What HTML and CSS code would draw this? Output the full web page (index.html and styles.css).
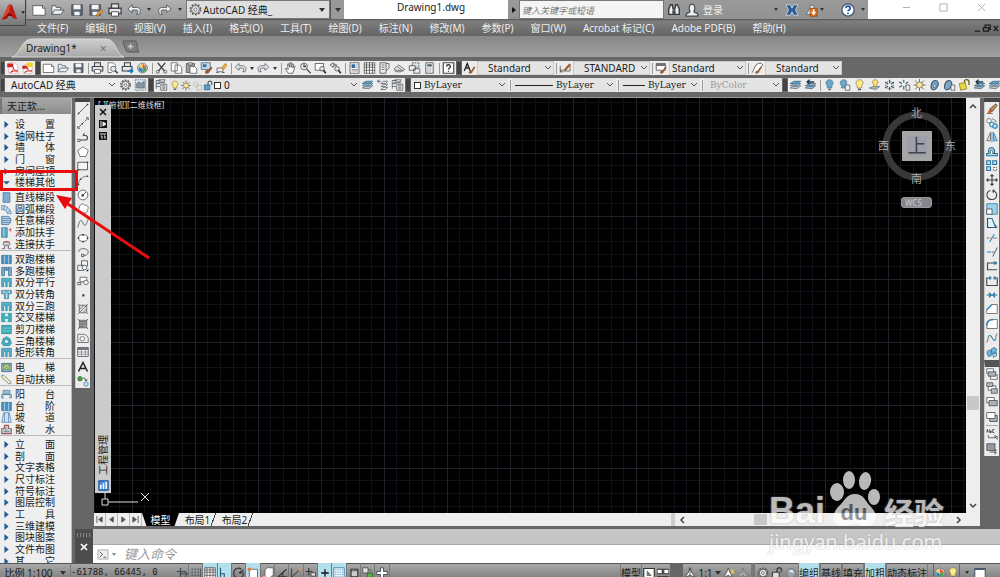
FILE: index.html
```html
<!DOCTYPE html>
<html lang="zh-CN">
<head>
<meta charset="utf-8">
<title>Drawing1.dwg</title>
<link rel="stylesheet" href="styles.css">
</head>
<body>
<svg class="sprite" aria-hidden="true">
  <g fill="none" stroke="#4a4f55" stroke-width="1.3">
  <symbol id="new" viewBox="0 0 16 16"><path d="M1 3h11l3 3v8H1z" fill="#fff" stroke="#555"/><path d="M12 3v3h3" stroke="#555" fill="#ccc"/></symbol>
  <symbol id="open" viewBox="0 0 16 16"><path d="M1 13V3h4l1 2h5v3M1 13l3-5h11l-4 5z" fill="#e9eef2" stroke="#4f565c"/></symbol>
  <symbol id="save" viewBox="0 0 16 16"><path d="M2 2h12v12H2z" fill="#5c6873" stroke="#434c55"/><path d="M4 2h8v5H4zM5 10h6v4H5z" fill="#f2f4f6" stroke="none"/></symbol>
  <symbol id="saveas" viewBox="0 0 16 16"><path d="M1 2h12v12H1z" fill="#5c6873" stroke="#434c55"/><path d="M3 2h8v5H3zM4 10h6v4H4z" fill="#f2f4f6" stroke="none"/><path d="M8 14l6-7 2 2-6 6z" fill="#e8a33c" stroke="#a66a1b"/></symbol>
  <symbol id="print" viewBox="0 0 16 16"><path d="M4 6V1h8v5M1 6h14v6H1z" fill="#e6e6e6" stroke="#3f454b" stroke-width="1.5"/><path d="M4 10h8v5H4z" fill="#fff" stroke="#3f454b"/></symbol>
  <symbol id="preview" viewBox="0 0 16 16"><path d="M12 6V4L9 1H2v13h5" fill="#fff" stroke="#555"/><circle cx="9" cy="9" r="3.500" fill="#dcecf5" stroke="#444"/><path d="M11.500 11.500L15 15" stroke="#444" stroke-width="2"/></symbol>
  <symbol id="plot" viewBox="0 0 16 16"><path d="M4 6V1h8v5M1 6h13v6H1z" fill="#e6e6e6" stroke="#3f454b" stroke-width="1.500"/><path d="M8 12h7M12 9l3 3-3 3" stroke="#1f78b8" stroke-width="2" fill="none"/></symbol>
  <symbol id="globe" viewBox="0 0 16 16"><circle cx="8" cy="8" r="6.500" fill="#dfe9ee" stroke="#59636a"/><path d="M8 2l5 4-5 3z" fill="#e25b3c"/><path d="M8 9l5-3v6l-5 2z" fill="#55a04b"/><path d="M8 9L3 6v6l5 2z" fill="#3f86c0"/><path d="M8 2L3 6l5 3z" fill="#f0ce4d"/></symbol>
  <symbol id="cut" viewBox="0 0 16 16"><path d="M3 1l9 11M13 1L4 12" stroke="#444" stroke-width="1.600"/><circle cx="3" cy="13" r="2" fill="none" stroke="#444"/><circle cx="13" cy="13" r="2" fill="none" stroke="#444"/></symbol>
  <symbol id="copy" viewBox="0 0 16 16"><path d="M1 1h8v11H1zM6 4h6l3 3v8H6z" fill="#fff" stroke="#555"/></symbol>
  <symbol id="paste" viewBox="0 0 16 16"><path d="M1 2h11v12H1z" fill="#9c9c92" stroke="#555"/><path d="M4 1h5v3H4z" fill="#ddd" stroke="#555"/><path d="M6 6h6l3 3v6H6z" fill="#fff" stroke="#555"/></symbol>
  <symbol id="match" viewBox="0 0 16 16"><path d="M1 1h12v9H1z" fill="#c9dcea" stroke="#3c5f7c"/><path d="M3 3h5v4H3z" fill="#3975a8"/><path d="M6 15c0-4 2-5 4-4l4-5 2 2-4 5c0 2-3 3-6 2z" fill="#9a5423"/></symbol>
  <symbol id="block" viewBox="0 0 16 16"><path d="M2 8h8v5H2z" fill="#eee" stroke="#555"/><path d="M1 14h3M9 14h3" stroke="#333"/><path d="M8 8l5-6 2 2-4 6z" fill="#efb444" stroke="#b77a1b"/></symbol>
  <symbol id="undo" viewBox="0 0 16 16"><path d="M6 2L1 7l5 4V8h5c2 0 2 3 0 5h3c3-5 0-8-3-8H6z" fill="#edf0f2" stroke="#4c5258"/></symbol>
  <symbol id="redo" viewBox="0 0 16 16"><path d="M10 2l5 5-5 4V8H5c-2 0-2 3 0 5H2C-1 8 2 5 5 5h5z" fill="#edf0f2" stroke="#4c5258"/></symbol>
  <symbol id="hand" viewBox="0 0 16 16"><path d="M5 15L1 9l1-1 3 2-1-7 1-1 2 5V1h2v6l2-5 1 1-1 5 2-3 1 1-3 9z" fill="#fff" stroke="#444"/></symbol>
  <symbol id="zoom" viewBox="0 0 16 16"><circle cx="6" cy="6" r="4.500" fill="#e4edf2" stroke="#444"/><path d="M6 3v3h3M9.500 9.500L15 15" stroke="#444" fill="none" stroke-width="1.700"/></symbol>
  <symbol id="zoomw" viewBox="0 0 16 16"><path d="M1 2h11v9H1z" fill="#fff" stroke="#444"/><circle cx="10" cy="9" r="3" fill="#dce9f1" stroke="#444"/><path d="M12 11l3 4" stroke="#222" stroke-width="2"/></symbol>
  <symbol id="zoomp" viewBox="0 0 16 16"><path d="M5 1L1 4l4 3V5h4V3H5z" fill="#eee" stroke="#444"/><circle cx="10" cy="9" r="3" fill="#dce9f1" stroke="#444"/><path d="M12 11l3 4" stroke="#222" stroke-width="2"/></symbol>
  <symbol id="props" viewBox="0 0 16 16"><path d="M2 1h12v14H2z" fill="#fff" stroke="#444"/><path d="M4 3h5v5H4z" fill="#2f6da3"/><path d="M10 4h3M10 7h3M4 10h9M4 12h9" stroke="#777"/></symbol>
  <symbol id="grid" viewBox="0 0 16 16"><path d="M1 1h14v14H1z" fill="#fff" stroke="#444"/><path d="M1 4h14M1 7h14M1 11h14M4 1v14M8 1v14M12 1v14" stroke="#444"/></symbol>
  <symbol id="palette" viewBox="0 0 16 16"><path d="M2 1h8v14H2z" fill="#eee" stroke="#444"/><path d="M10 2h4v6l-4 4M4 4h4M4 7h4M4 10h4" stroke="#555" fill="none"/></symbol>
  <symbol id="sheet" viewBox="0 0 16 16"><path d="M1 9l6-5 8 6-5 3H3z" fill="#e6e9eb" stroke="#4c5359"/><path d="M5 6l8 6M2 11h9" stroke="#4c5359"/></symbol>
  <symbol id="markup" viewBox="0 0 16 16"><path d="M5 1h9v6H5z" fill="#d6e4ee" stroke="#444" stroke-dasharray="2 1"/><path d="M1 5h8v6H1zM7 9h8v6H7z" fill="#eee" stroke="#444"/></symbol>
  <symbol id="calc" viewBox="0 0 16 16"><path d="M3 1h10v14H3z" fill="#e9edf0" stroke="#444"/><path d="M5 3h6v3H5z" fill="#55606a"/><path d="M5 9h6M5 12h6" stroke="#555" stroke-dasharray="1 1"/></symbol>
  <symbol id="help" viewBox="0 0 16 16"><path d="M1 1h14v14H1z" fill="#fff" stroke="#444" stroke-width="1.500"/><path d="M5.500 6c0-4 5-3 5 0 0 2-2.500 2-2.500 4M8 11.500V13" stroke="#222" stroke-width="1.700" fill="none"/></symbol>
  <symbol id="helpr" viewBox="0 0 16 16"><circle cx="8" cy="8" r="7" fill="#fff" stroke="#45536b" stroke-width="1.500"/><path d="M5.500 6c0-3.500 5-3 5 0 0 2-2.500 2-2.500 3.500M8 11v1.800" stroke="#2252a4" stroke-width="2" fill="none"/></symbol>
  <symbol id="pdf" viewBox="0 0 16 16"><path d="M3 1h8l4 4v10H3z" fill="#fff" stroke="#d8a8a8"/><path d="M1 2h8v5H1z" fill="#cf2424"/><path d="M5 14c3-2 5-5 4-7 0 3 3 5 6 5-4 0-7 0-10 2z" stroke="#d02020" fill="none" stroke-width="1.200"/></symbol>
  <symbol id="pdf2" viewBox="0 0 16 16"><path d="M3 4h8l3 3v8H3z" fill="#fff" stroke="#d8a8a8"/><path d="M1 5h7v4H1z" fill="#cf2424"/><path d="M4 14c3-2 5-4 4-6 0 3 3 4 6 4-4 0-7 0-10 2z" stroke="#d02020" fill="none"/><path d="M7 1h8v5h-4l-2 2V6H7z" fill="#f5d41c"/></symbol>
  <symbol id="textstyle" viewBox="0 0 16 16"><path d="M1 12L5 2l4 10M3 8h5" stroke="#222" stroke-width="1.800" fill="none"/><path d="M7 15c0-3 2-4 3-3l4-6 2 1-4 6c0 2-3 3-5 2z" fill="#9a5a2c"/></symbol>
  <symbol id="dimstyle" viewBox="0 0 16 16"><path d="M1 5v9M14 3v9M1 12h13M1 12l3-2M1 12l3 2" stroke="#444" fill="none"/><path d="M5 11l8-9 2 2-7 8z" fill="#a35b2b"/></symbol>
  <symbol id="tabstyle" viewBox="0 0 16 16"><path d="M1 2h12v9H1z" fill="#fff" stroke="#444"/><path d="M1 4h12" stroke="#444" stroke-width="2"/><path d="M6 15c0-3 2-4 3-3l4-6 2 1-4 6c0 2-3 3-5 2z" fill="#9a5a2c"/></symbol>
  <symbol id="mlstyle" viewBox="0 0 16 16"><path d="M1 14L6 4q6-5 9 0l-4 5" fill="#fff" stroke="#444"/><path d="M5 15c0-3 2-4 3-3l4-6 2 1-4 6c0 2-3 3-5 2z" fill="#9a5a2c"/></symbol>
  <symbol id="gear" viewBox="0 0 16 16"><circle cx="8" cy="8" r="6.200" fill="none" stroke="#555" stroke-width="2" stroke-dasharray="2.400 1.500"/><circle cx="8" cy="8" r="4.800" fill="#eee" stroke="#555"/><circle cx="8" cy="8" r="1.900" fill="#fff" stroke="#555"/></symbol>
  <symbol id="wsave" viewBox="0 0 16 16"><path d="M1 1h14v14H1z" stroke="#5b6c7b" fill="#dce5eb" stroke-dasharray="2 1"/><path d="M3 12V6l3-2 3 2 4-3v9z" fill="#8497a6" stroke="#566572"/></symbol>
  <symbol id="layers" viewBox="0 0 16 16"><path d="M1 12l5-3h9l-5 4zM1 9l5-3h9l-5 4z" fill="#b8cbd8" stroke="#5c7180"/><path d="M1 6l5-3h9l-5 4z" fill="#5aa0cd" stroke="#3e6581"/></symbol>
  <symbol id="layerman" viewBox="0 0 16 16"><path d="M1 13V2h6M1 6h5M1 10h5M3 2l2-1h8l-2 3H3M3 7l2-2h8" stroke="#4c565e" fill="none"/><path d="M7 7h8v8H7z" fill="#eee" stroke="#4c565e"/><path d="M9 9h4M9 11h4M9 13h4" stroke="#4c565e"/></symbol>
  <symbol id="layerprev" viewBox="0 0 16 16"><path d="M1 3h5M1 3l3-2M1 3l3 2M6 6l3-3h6l-3 3zM6 10l3-3h6l-3 3zM6 14l3-3h6l-3 3z" fill="#eef1f3" stroke="#4c565e"/></symbol>
  <symbol id="bulb" viewBox="0 0 16 16"><path d="M8 1c-5 0-6 5-3 8v3h6V9c3-3 2-8-3-8z" fill="#fbe98e" stroke="#8f8247"/><path d="M6 14h4" stroke="#555" stroke-width="2"/></symbol>
  <symbol id="bulbb" viewBox="0 0 16 16"><path d="M8 1c-5 0-6 5-3 8v3h6V9c3-3 2-8-3-8z" fill="#69a9cf" stroke="#517790"/><path d="M6 14h4" stroke="#777" stroke-width="2"/></symbol>
  <symbol id="bulbs" viewBox="0 0 16 16"><path d="M7 1C2 1 1 6 4 9v3h5V9c3-3 3-8-2-8z" fill="#69a9cf" stroke="#517790"/><path d="M9 8h6v7H9z" fill="#eee" stroke="#555"/></symbol>
  <symbol id="bulbl" viewBox="0 0 16 16"><path d="M1 12l5-2h9l-5 4z" fill="#9fb8c8" stroke="#617787"/><path d="M9 1C5 1 4 5 7 7v3h4V7c3-2 2-6-2-6z" fill="#fbe172" stroke="#96853d"/></symbol>
  <symbol id="sun" viewBox="0 0 16 16"><path d="M8 0v16M0 8h16M2 2l12 12M14 2L2 14" stroke="#6b6551" stroke-width="1.200"/><circle cx="8" cy="8" r="4" fill="#fce5a0" stroke="#7a6e43"/></symbol>
  <symbol id="snow" viewBox="0 0 16 16"><path d="M8 1v14M2 4l12 8M14 4L2 12" stroke="#435b66" stroke-width="1.500"/><circle cx="8" cy="8" r="5" stroke="#435b66" fill="none" stroke-dasharray="3 1.500"/><circle cx="8" cy="8" r="2.500" fill="#eef6fa"/></symbol>
  <symbol id="snows" viewBox="0 0 16 16"><path d="M7 1v13M1 4l12 7M13 4L1 11" stroke="#435b66" stroke-width="1.500"/><circle cx="7" cy="7" r="2.500" fill="#eef6fa"/><path d="M10 8h5v7h-5z" fill="#eee" stroke="#555"/></symbol>
  <symbol id="ghost" viewBox="0 0 16 16"><circle cx="6" cy="6" r="4" fill="#ddd" stroke="#aaa" stroke-dasharray="2 1"/><path d="M8 8h7v7H8z" fill="#e6e6e6" stroke="#aaa"/></symbol>
  <symbol id="lock" viewBox="0 0 16 16"><path d="M8 7V4c0-4 6-4 6 0v3" stroke="#445d70" fill="none" stroke-width="1.800"/><path d="M2 7h9v8H2z" fill="#55a0d0" stroke="#36566b"/></symbol>
  <symbol id="lockg" viewBox="0 0 16 16"><path d="M8 7V4c0-4 6-4 6 0v3" stroke="#3d4348" fill="none" stroke-width="1.800"/><path d="M2 7h9v8H2z" fill="#dcdcdc" stroke="#3d4348" stroke-width="1.500"/></symbol>
  <symbol id="lockb" viewBox="0 0 16 16"><path d="M4 13C2 9 5 2 9 2s5 4 3 8-6 6-8 3z" fill="#7ba7c8" stroke="#405970" stroke-width="1.500"/><path d="M6 11c0-3 3-5 4-4s-1 5-4 4z" fill="#e6f0f7" stroke="#405970"/></symbol>
  <symbol id="lockbs" viewBox="0 0 16 16"><path d="M2 13C0 9 3 2 7 2s5 4 3 8-6 6-8 3z" fill="#7ba7c8" stroke="#405970" stroke-width="1.500"/><path d="M10 8h5v7h-5z" fill="#eee" stroke="#555"/></symbol>
  <symbol id="locky" viewBox="0 0 16 16"><path d="M8 6V3c0-3 6-3 6 1v4" stroke="#69651f" fill="none" stroke-width="1.800"/><path d="M1 6l8-1 2 8-8 2z" fill="#e8d93b" stroke="#827920"/></symbol>
  <symbol id="laycur" viewBox="0 0 16 16"><path d="M1 12l5-3h9l-5 4zM1 9l5-3h9l-5 4z" fill="#91b7d0" stroke="#4b687d"/><path d="M3 4h10M3 4l4-3M3 4l4 3" stroke="#1d3b54" stroke-width="2" fill="none"/></symbol>
  <symbol id="line" viewBox="0 0 16 16"><path d="M2 14L14 2" stroke="#3c4248"/><path d="M1 13h2v2H1zM13 1h2v2h-2z" fill="#333"/></symbol>
  <symbol id="xline" viewBox="0 0 16 16"><path d="M2 14L14 2" stroke="#3c4248" stroke-dasharray="5 1"/><path d="M1 12v3h3M12 1h3v3" stroke="#333" fill="none"/><path d="M6 8h2v2H6z" fill="#333"/></symbol>
  <symbol id="pline" viewBox="0 0 16 16"><path d="M2 12h9c4 0 4-6 0-6H8M8 6l2-3" stroke="#43494f" fill="none" stroke-width="1.500"/><path d="M1 11h3v3H1z" fill="#fff" stroke="#43494f"/></symbol>
  <symbol id="poly" viewBox="0 0 16 16"><path d="M8 1l7 5-3 8H4L1 6z" stroke="#555" fill="#fff"/></symbol>
  <symbol id="rect" viewBox="0 0 16 16"><path d="M1 3h13v10H1z" fill="#f5f5f5" stroke="#555b61" stroke-width="1.300"/><path d="M1 12h2v2H1zM13 2h2v2h-2z" fill="#444"/></symbol>
  <symbol id="arc" viewBox="0 0 16 16"><path d="M2 14C2 7 7 3 14 3" stroke="#555b61" fill="none"/><path d="M1 13h2v2H1zM4 6h2v2H4zM13 2h2v2h-2z" fill="#444"/></symbol>
  <symbol id="circle" viewBox="0 0 16 16"><circle cx="8" cy="8" r="6.500" fill="#fff" stroke="#42484e"/><path d="M8 8l4-4" stroke="#333"/><path d="M6 7h3v3H6z" fill="#333"/></symbol>
  <symbol id="cloud" viewBox="0 0 16 16"><path d="M4 13C0 12 0 8 3 7c0-6 6-7 7-4 5-1 6 4 4 6 0 5-4 5-5 3" stroke="#555" fill="#fff"/></symbol>
  <symbol id="spline" viewBox="0 0 16 16"><path d="M1 14C4 2 6 3 8 8s4 5 7-6" stroke="#42484e" fill="none"/></symbol>
  <symbol id="ellipse" viewBox="0 0 16 16"><ellipse cx="8" cy="8" rx="6" ry="4.500" fill="#fff" stroke="#42484e"/><path d="M7 3h2v2H7zM1 7h2v2H1zM13 7h2v2h-2zM7 12h2v2H7z" fill="#333"/></symbol>
  <symbol id="earc" viewBox="0 0 16 16"><path d="M2 8c0-6 13-6 13 0 0 3-3 5-7 5" stroke="#42484e" fill="none"/><path d="M6 11h3v3H6z" fill="#fff" stroke="#333"/></symbol>
  <symbol id="insert" viewBox="0 0 16 16"><path d="M6 1h8v7H6zM1 7h8v7H1z" fill="#eef2f5" stroke="#42484e"/><circle cx="10" cy="10" r="3" fill="#fff" stroke="#42484e"/><path d="M12 15l3-3v3z" fill="#111"/></symbol>
  <symbol id="mkblock" viewBox="0 0 16 16"><path d="M4 3h9v6H4z" fill="#fff" stroke="#42484e"/><path d="M1 10h4v3H1z" fill="#eee" stroke="#42484e"/><circle cx="12" cy="10" r="3" fill="#fff" stroke="#42484e"/></symbol>
  <symbol id="point" viewBox="0 0 16 16"><path d="M7 7h3v3H7z" fill="#444"/></symbol>
  <symbol id="hatch" viewBox="0 0 16 16"><path d="M3 3h10v10H3z" fill="#ddd" stroke="#555"/><path d="M3 9l6-6M3 13L13 3M8 13l5-5M1 1l3 3M15 1l-3 3M1 15l3-3M15 15l-3-3" stroke="#62686d"/></symbol>
  <symbol id="trans" viewBox="0 0 16 16"><path d="M1 1h14v14H1z" fill="#eaf5fb" stroke="#2c6f9c"/><path d="M3 4h11M3 7h11M3 10h11M3 13h11" stroke="#5a9cc8" stroke-width="1.500" stroke-dasharray="1.500 1.500"/></symbol>
  <symbol id="grad" viewBox="0 0 16 16"><path d="M3 3h10v10H3z" fill="#aaa" stroke="#555"/><path d="M4 5h8M4 8h8M4 11h6M1 1l3 3M15 1l-3 3M1 15l3-3M15 15l-3-3" stroke="#444"/></symbol>
  <symbol id="region" viewBox="0 0 16 16"><path d="M1 14V3h8c3 0 6 3 6 6v5z" fill="#eee" stroke="#555"/><circle cx="7" cy="9" r="3" fill="#fff" stroke="#555"/></symbol>
  <symbol id="table" viewBox="0 0 16 16"><path d="M1 2h14v12H1z" fill="#fff" stroke="#42484e"/><path d="M1 4h14" stroke="#42484e" stroke-width="2"/><path d="M1 8h14M1 11h14M6 4v10M11 4v10" stroke="#73797f"/></symbol>
  <symbol id="text" viewBox="0 0 16 16"><path d="M2 14L8 2l6 12M4.500 10h7" stroke="#222" stroke-width="2" fill="none"/></symbol>
  <symbol id="addsel" viewBox="0 0 16 16"><circle cx="4" cy="5" r="3" fill="#4ca24a" stroke="#2a6d2b"/><circle cx="12" cy="12" r="3" fill="#bde2f4" stroke="#3c83aa"/><path d="M8 4c3 0 4 1 4 4M10 6l2 2 2-2" stroke="#333" fill="none"/></symbol>
  <symbol id="erase" viewBox="0 0 16 16"><path d="M1 14h8" stroke="#555"/><path d="M2 13l3-5 4 3-4 3z" fill="#d4582d"/><path d="M5 8l8-7 2 2-6 8z" fill="#bb8d5b" stroke="#674928"/></symbol>
  <symbol id="mcopy" viewBox="0 0 16 16"><circle cx="4" cy="5" r="3" fill="#fff" stroke="#555"/><circle cx="8" cy="10" r="3" fill="#fff" stroke="#2e85b4" stroke-width="1.500"/><circle cx="12" cy="12" r="3" fill="#bde2f4" stroke="#2e85b4" stroke-width="1.500"/><path d="M8 2l5 3v2" stroke="#555" fill="none"/></symbol>
  <symbol id="mirror" viewBox="0 0 16 16"><path d="M6 2v11H1z" fill="#ddd" stroke="#555"/><path d="M10 2v11h5z" fill="#8cc9e8" stroke="#287aa8"/><path d="M8 1v14" stroke="#287aa8"/></symbol>
  <symbol id="offset" viewBox="0 0 16 16"><path d="M1 13h14v-3h-4c2-4-1-8-4-8S2 6 4 10H1z" fill="#b5dced" stroke="#27739e" stroke-width="1.500"/><path d="M6 10c-2-6 4-6 3-1v1h3" stroke="#333" fill="#fff"/></symbol>
  <symbol id="array" viewBox="0 0 16 16"><path d="M1 1h5v5H1zM9 1h5v5H9zM1 9h5v5H1z" fill="#c6e3f0" stroke="#27739e" stroke-width="1.500"/><path d="M10 10h4v4h-4z" fill="#fff" stroke="#444" stroke-dasharray="2 1"/></symbol>
  <symbol id="move" viewBox="0 0 16 16"><path d="M8 1v14M1 8h14M6 3l2-2 2 2M6 13l2 2 2-2M3 6L1 8l2 2M13 6l2 2-2 2" stroke="#444" stroke-width="1.500" fill="none"/></symbol>
  <symbol id="rotate" viewBox="0 0 16 16"><path d="M6 2C-1 4 0 14 8 14S16 4 9 2M9 2l2-1M9 2l1 3" stroke="#444" stroke-width="1.500" fill="none"/></symbol>
  <symbol id="scale" viewBox="0 0 16 16"><path d="M1 1h14v14H1z" fill="#9dd2e9" stroke="#27739e"/><path d="M1 8h7v7H1z" fill="#fff" stroke="#444"/></symbol>
  <symbol id="stretch" viewBox="0 0 16 16"><path d="M2 2h6l5 12H2z" fill="#e2f1f8" stroke="#27739e" stroke-width="1.500"/><path d="M2 2v12h5M12 14h3M12 10l3 4" stroke="#222" stroke-dasharray="2 1" fill="none"/></symbol>
  <symbol id="trim" viewBox="0 0 16 16"><path d="M1 8h5M10 8h5" stroke="#333" stroke-dasharray="3 1"/><path d="M5 13L11 3" stroke="#2e85b4" stroke-width="1.500"/></symbol>
  <symbol id="extend" viewBox="0 0 16 16"><path d="M1 8h6M8 8h3" stroke="#2e85b4" stroke-width="1.500"/><path d="M9 14l6-12" stroke="#555" stroke-width="1.300"/></symbol>
  <symbol id="brk" viewBox="0 0 16 16"><path d="M15 4H2v9h13" stroke="#42484e" fill="none" stroke-width="1.500"/><path d="M10 2h4v4h-4z" fill="#2e85b4"/></symbol>
  <symbol id="brk2" viewBox="0 0 16 16"><path d="M5 4H1v10h14V4h-4" stroke="#42484e" fill="none" stroke-width="1.500"/><path d="M4 2h3v4H4zM10 2h3v4h-3z" fill="#2e85b4"/></symbol>
  <symbol id="join" viewBox="0 0 16 16"><path d="M1 8h14M4 5l3 3-3 3M12 5L9 8l3 3" stroke="#1f6fa0" fill="none" stroke-width="1.500"/></symbol>
  <symbol id="chamfer" viewBox="0 0 16 16"><path d="M1 14V9l7-7h7v12z" fill="#fff" stroke="#555"/><path d="M1 9l7-7" stroke="#2e85b4" stroke-width="2"/></symbol>
  <symbol id="fillet" viewBox="0 0 16 16"><path d="M1 14v-4q0-8 9-8h5v12z" fill="#fff" stroke="#555"/><path d="M1 10q0-8 9-8" stroke="#2e85b4" stroke-width="2" fill="none"/></symbol>
  <symbol id="blend" viewBox="0 0 16 16"><path d="M1 14c2-4 2-6 2-8M15 2c-2 3-2 5-2 8" stroke="#444" fill="none"/><path d="M3 6c5-6 6 10 10 4" stroke="#2e85b4" fill="none" stroke-width="1.500"/></symbol>
  <symbol id="explode" viewBox="0 0 16 16"><path d="M1 8l3-3 3 2v6l-4 1zM7 4l4-2 3 2-1 5-5 1z" fill="#74bad9" stroke="#22678d"/><path d="M9 11l5-2v4l-4 2z" fill="#bee1f0" stroke="#22678d"/></symbol>
  <symbol id="order" viewBox="0 0 16 16"><path d="M1 1h9v6H1zM6 9h9v6H6z" fill="#fff" stroke="#42484e"/><path d="M3 5h10v6H3z" fill="#a9b2b9" stroke="#42484e"/></symbol>
  <symbol id="order2" viewBox="0 0 16 16"><path d="M3 5h10v6H3z" fill="#fff" stroke="#42484e"/><path d="M1 1h8v5H1zM7 9h8v6H7z" fill="#b4bcc3" stroke="#42484e"/></symbol>
  <symbol id="order3" viewBox="0 0 16 16"><path d="M1 2h10v7H1z" fill="#fff" stroke="#42484e"/><path d="M4 6h11v7H4z" fill="#a9b2b9" stroke="#42484e"/></symbol>
  <symbol id="order4" viewBox="0 0 16 16"><path d="M5 6h10v8H5z" fill="#a9b2b9" stroke="#42484e"/><path d="M1 2h11v8H1z" fill="#fff" stroke="#42484e"/></symbol>
  <symbol id="annof" viewBox="0 0 16 16"><path d="M1 6l1-4 1 4M5 2v4h2V4H5M11 2H9v4h2" stroke="#222" fill="none"/><path d="M3 9v4h9V9M12 12l3 3v-4z" stroke="#444" fill="none"/></symbol>
  <symbol id="hback" viewBox="0 0 16 16"><path d="M1 1h11v9H1z" fill="#929ba2" stroke="#42484e"/><path d="M5 12h7v3M13 8v6" stroke="#333" fill="none"/></symbol>
  <symbol id="s1" viewBox="0 0 16 16"><path d="M3 1h10v14H3z" fill="#8cb6d8" stroke="#386b96"/><path d="M6 1v14M10 1v14" stroke="#5f91ba"/></symbol>
  <symbol id="s2" viewBox="0 0 16 16"><path d="M1 8V2c7 0 13 5 14 12H9c0-4-4-6-8-6z" fill="#c9dfed" stroke="#4c7b9d"/><path d="M5 2L4 9M10 4L7 10M14 9l-5 3" stroke="#4c7b9d"/></symbol>
  <symbol id="s3" viewBox="0 0 16 16"><path d="M1 2h9c6 1 6 11 0 12H1z" fill="#b6d1e5" stroke="#315f8d"/><path d="M1 5h12M1 8h13M1 11h12" stroke="#4977a4"/></symbol>
  <symbol id="s4" viewBox="0 0 16 16"><path d="M1 1h8v14H1z" fill="#5dabc7" stroke="#28718b"/><path d="M4 1v14" stroke="#d0edf6"/><path d="M11 4h5M13.500 1v6" stroke="#c44"/></symbol>
  <symbol id="s5" viewBox="0 0 16 16"><path d="M1 14h4V9h6v5h4M3 9l1-5h8l1 5" stroke="#7b6568" fill="#c9dce8" stroke-width="1.300"/><path d="M5 4h6" stroke="#c55" stroke-width="2"/></symbol>
  <symbol id="s6" viewBox="0 0 16 16"><path d="M1 2h14v12H1z" fill="#4b91bd" stroke="#2a6a94"/><path d="M5 2v12M11 2v12" stroke="#bee4f3"/></symbol>
  <symbol id="s7" viewBox="0 0 16 16"><path d="M1 14V2h14v12h-4V6H5v8z" fill="#7dafd1" stroke="#2c6488"/><path d="M5 2v4M8 2v4M11 2v4" stroke="#2c6488"/></symbol>
  <symbol id="s8" viewBox="0 0 16 16"><path d="M1 2h14v12h-3V6H9v8H7V6H4v8H1z" fill="#55b6cf" stroke="#267a94"/></symbol>
  <symbol id="s9" viewBox="0 0 16 16"><path d="M1 2h14v5h-4v7H5V7H1z" fill="#70b5ce" stroke="#2f728b"/><path d="M8 6v8M4 2v4M12 2v4" stroke="#e3f5fa"/></symbol>
  <symbol id="s10" viewBox="0 0 16 16"><path d="M1 2h14v12H1z" fill="#43b0ba" stroke="#27848c"/><path d="M6 2h4v4H6zM6 10h4v4H6z" fill="#dff6f8"/></symbol>
  <symbol id="s11" viewBox="0 0 16 16"><path d="M1 2h14v12H1z" fill="#3dacb8" stroke="#287e88"/><path d="M1 6h14M1 10h14" stroke="#8edadf"/></symbol>
  <symbol id="s12" viewBox="0 0 16 16"><path d="M8 1l5 3 2 7-3 3H4l-3-3 2-7z" fill="#47b0c6" stroke="#287e92"/><circle cx="8" cy="8" r="3" fill="#dcf3fa" stroke="#287e92"/></symbol>
  <symbol id="s13" viewBox="0 0 16 16"><path d="M1 2h14v12H1z" fill="#87c7d2" stroke="#348"/><path d="M4 4h8v7H4z" fill="#efd96c" stroke="#495"/><path d="M2 3l12 10M14 3L2 13" stroke="#577"/></symbol>
  <symbol id="s14" viewBox="0 0 16 16"><path d="M1 2h3l10 9v3h-3L1 5z" fill="#f3efb2" stroke="#4c7390"/></symbol>
  <symbol id="s15" viewBox="0 0 16 16"><path d="M3 2h10v5H3zM1 8h14v5H1z" fill="#99c0dc" stroke="#477595"/><path d="M4 9h8v5H4z" fill="#edf4f7"/></symbol>
  <symbol id="s16" viewBox="0 0 16 16"><path d="M4 1h8l3 14H1z" fill="#cae0f4" stroke="#507caa"/><path d="M5 1v14M11 1v14" stroke="#507caa"/></symbol>
  <symbol id="s17" viewBox="0 0 16 16"><path d="M1 7l4-1V2h6v4l4 1v7H1z" fill="#bdccd0" stroke="#a45555" stroke-width="1.500"/><path d="M4 11h8M7 5v5" stroke="#577"/></symbol>
  <symbol id="tri" viewBox="0 0 16 16"><path d="M5 3l6 5-6 5z" fill="#1b5c96"/></symbol>
  <symbol id="trid" viewBox="0 0 16 16"><path d="M3 6h10l-5 5z" fill="#1b5c96"/></symbol>
  <symbol id="bino" viewBox="0 0 16 16"><path d="M2 13V7l2-5h2l1 5h2l1-5h2l2 5v6h-5V9H7v4z" fill="#eef1f3" stroke="#363b40" stroke-width="1.600"/></symbol>
  <symbol id="user" viewBox="0 0 16 16"><path d="M1 15c0-3 2-4 4-4 1-1 1-2 0-3-2-9 8-9 6 0-1 1-1 2 0 3 2 0 4 1 4 4z" fill="#eef1f3" stroke="#434950" stroke-width="1.400"/></symbol>
  <symbol id="exch" viewBox="0 0 16 16"><path d="M1 2h5l2 4 2-4h5l-3 6 3 6h-5l-2-4-2 4H1l3-6z" fill="#285b91" stroke="#c9d8e6"/></symbol>
  <symbol id="cloud2" viewBox="0 0 16 16"><path d="M4 11L8 2l4 2-3 9H2z" fill="#eee" stroke="#59636e"/><path d="M7 6h8v9H7z" fill="#dd7425" stroke="#954910"/><path d="M11 7v6M9 10l2 3 2-3" stroke="#fff" stroke-width="1.500" fill="none"/></symbol>
  <symbol id="plus" viewBox="0 0 16 16"><path d="M8 3v10M3 8h10" stroke="#111" stroke-width="1.700"/></symbol>
  <symbol id="infer" viewBox="0 0 16 16"><path d="M6 1v14M1 6h12M5 9h8M12 6l3 3-3 4" stroke="#3d4750" stroke-width="1.500" fill="none"/></symbol>
  <symbol id="snap" viewBox="0 0 16 16"><path d="M2 3h12M2 7h12M2 11h12" stroke="#59616a" stroke-width="2" stroke-dasharray="2 2"/><path d="M14 2v12H4" fill="none" stroke="#444"/></symbol>
  <symbol id="ortho" viewBox="0 0 16 16"><path d="M2 1v13h13M2 9h5v5" stroke="#1f5877" stroke-width="1.500" fill="none"/></symbol>
  <symbol id="polar" viewBox="0 0 16 16"><path d="M14 9c-1 8-13 7-13-1 0-6 7-8 10-5M8 8l6-4M8 8h7" stroke="#333" stroke-width="1.500" fill="none"/></symbol>
  <symbol id="osnap" viewBox="0 0 16 16"><path d="M3 3h11v11H3z" fill="#fff" stroke="#46515a"/><path d="M1 1h4v4H1z" fill="#e87831"/></symbol>
  <symbol id="osnap3" viewBox="0 0 16 16"><path d="M4 4l3-3h8v9l-4 4H4z" fill="#fff" stroke="#46515a"/><circle cx="3" cy="13" r="2" fill="#fbb" stroke="#b65"/></symbol>
  <symbol id="angle" viewBox="0 0 16 16"><path d="M14 3L3 13h12M9 8v5" stroke="#333" stroke-width="1.500" fill="none"/></symbol>
  <symbol id="ducs" viewBox="0 0 16 16"><path d="M2 2v12h12M2 14L13 3" stroke="#444" stroke-width="1.400" fill="none"/><path d="M13 1l2 3-4 1z" fill="#e5a12e"/></symbol>
  <symbol id="dyn" viewBox="0 0 16 16"><path d="M5 1v10M1 6h9" stroke="#333" stroke-width="1.500"/><path d="M8 8h6v4H8z" fill="#eee" stroke="#333"/></symbol>
  <symbol id="qp" viewBox="0 0 16 16"><path d="M4 3h9v10H4z" fill="#ccc" stroke="#333" stroke-width="1.500"/><path d="M4 5h9" stroke="#333"/></symbol>
  <symbol id="sc" viewBox="0 0 16 16"><path d="M1 1h7v7H1z" fill="#ddd" stroke="#444"/><path d="M7 8h7v7H7z" fill="#55ad45" stroke="#286420"/><path d="M9 3l4 2" stroke="#444"/></symbol>
  <symbol id="cross" viewBox="0 0 16 16"><path d="M6 1h4v5h5v4h-5v5H6v-5H1V6h5z" fill="#fff" stroke="#47535f" stroke-width="1.300"/></symbol>
  <symbol id="annos" viewBox="0 0 16 16"><path d="M8 1L6 7l-5 7 7-3 7 3-5-7z" fill="#fff" stroke="#333"/><path d="M8 1v10" stroke="#333"/></symbol>
  <symbol id="annog" viewBox="0 0 16 16"><path d="M8 1L6 7l-5 7 7-3 7 3-5-7z" fill="#bbb" stroke="#777"/><path d="M8 1v10" stroke="#777"/></symbol>
  <symbol id="annoy" viewBox="0 0 16 16"><path d="M7 1L5 7l-4 7 6-3 6 3-4-7z" fill="#fff" stroke="#444"/><path d="M10 2l2 2 3-1-1 3 2 3-3-1-2 2V6z" fill="#f4c443"/></symbol>
  <symbol id="mspace" viewBox="0 0 16 16"><path d="M1 2h14v12H1z" fill="#fff" stroke="#333" stroke-width="1.500"/><path d="M5 4l7 8H5z" fill="#777"/></symbol>
  <symbol id="qview" viewBox="0 0 16 16"><path d="M0 3h7v6H0zM9 3h7v6H9z" fill="#fff" stroke="#333" stroke-width="1.500"/><path d="M0 13h16" stroke="#333" stroke-width="1.500"/></symbol>
  <symbol id="monitor" viewBox="0 0 16 16"><path d="M1 2h14v12H1z" fill="#fff" stroke="#4a5a70" stroke-width="1.500"/><path d="M1 3h14" stroke="#4a5a70" stroke-width="2"/></symbol>
  <symbol id="ball" viewBox="0 0 16 16"><circle cx="8" cy="8" r="6" fill="#9aa1a6" stroke="#687078"/><path d="M4 5l6-1 2 4-4-1z" fill="#edf1f3"/></symbol>
  <symbol id="chart" viewBox="0 0 16 16"><path d="M1 1h14v14H1z" fill="#2676d1" stroke="#0b4790"/><path d="M3 13V7h2v6M7 13V5h2v8M11 13V3h2v10M3 5l9-3" fill="#fff" stroke="#fff" stroke-width=".5"/></symbol>
  </g>
</svg>

<header class="head">
  <button class="app" aria-label="应用程序菜单"><svg viewBox="0 0 24 24"><path d="M9 2h4l6 17-5-1-3-6-4 7-6 1z" fill="#a30f0c"/><path d="M9 2h3l-2 9-9 9z" fill="#e04427"/><path d="M12 2l7 17-5-1-3-7z" fill="#c11b16"/><path d="M7 15l7 1-2-3H8z" fill="#760807"/></svg><span class="caret"></span></button>
  <div class="title">
    <div class="quick">
      <button aria-label="新建"><svg><use href="#new"/></svg></button><button aria-label="打开"><svg><use href="#open"/></svg></button><button aria-label="保存"><svg><use href="#save"/></svg></button><button aria-label="另存为"><svg><use href="#saveas"/></svg></button><button aria-label="打印"><svg><use href="#print"/></svg></button><button aria-label="放弃"><svg><use href="#undo"/></svg></button><span class="caret"></span><button aria-label="重做"><svg><use href="#redo"/></svg></button><span class="caret"></span>
    </div>
    <label class="space"><svg><use href="#gear"/></svg><select aria-label="工作空间"><option>AutoCAD 经典_</option></select><span class="caret"></span></label>
    <button class="more" aria-label="自定义"><span class="caret"></span></button>
    <h1 class="docname">Drawing1.dwg</h1>
    <button class="expand" aria-label="展开搜索"><span></span></button>
    <input class="search" type="text" aria-label="搜索" placeholder="键入关键字或短语">
    <div class="account"><button aria-label="搜索"><svg><use href="#bino"/></svg></button><button class="login"><svg><use href="#user"/></svg>登录</button><span class="caret push"></span><button aria-label="Exchange"><svg><use href="#exch"/></svg></button><button aria-label="360"><svg><use href="#cloud2"/></svg></button><span class="caret"></span><button class="hlp" aria-label="帮助"><svg><use href="#helpr"/></svg></button><span class="caret"></span></div>
    <div class="win"><button aria-label="最小化"><svg viewBox="0 0 10 10"><path d="M1 5h8"/></svg></button><button aria-label="最大化"><svg viewBox="0 0 10 10"><path d="M1 1h8v8H1z"/></svg></button><button aria-label="关闭"><svg viewBox="0 0 10 10"><path d="M1 1l8 8M9 1L1 9"/></svg></button></div>
  </div>
  <nav class="menu"><button>文件(F)</button><button>编辑(E)</button><button>视图(V)</button><button>插入(I)</button><button>格式(O)</button><button>工具(T)</button><button>绘图(D)</button><button>标注(N)</button><button>修改(M)</button><button>参数(P)</button><button>窗口(W)</button><button>Acrobat 标记(C)</button><button>Adobe PDF(B)</button><button>帮助(H)</button>
    <svg class="mdi" viewBox="0 0 28 10"><path d="M1 8h6M11 4h6v4h-6zM13 4V1h6v5h-2M23 2l5 6M28 2l-5 6" fill="none" stroke="#1b1b1b" stroke-width="1.500"/></svg></nav>
</header>

<div class="files">
  <div class="filetab"><svg viewBox="0 0 112 19" preserveAspectRatio="none"><defs><linearGradient id="tg" x2="0" y2="1"><stop stop-color="#cfcfcf"/><stop offset="1" stop-color="#a8a8a8"/></linearGradient></defs><path d="M0 19C8 18 9 1 20 1h74c11 0 10 17 18 18z" fill="url(#tg)" stroke="#d8d8d8"/></svg><span>Drawing1*</span><button aria-label="关闭">×</button></div>
  <button class="newtab" aria-label="新选项卡"><svg viewBox="0 0 19 14"><path d="M1 1h13c3 0 2 10 4 12H7C3 13 2 5 1 1z" fill="#7d7d7d" stroke="#555"/><path d="M9 4v6M6 7h6" stroke="#ccc" stroke-width="1.500"/></svg></button>
</div>

<div class="bars">
  <div class="bar">
    <span class="grip thin"></span>
    <div class="tools"><svg><use href="#pdf"/></svg><svg><use href="#pdf2"/></svg></div>
    <span class="grip"></span>
    <div class="tools"><svg><use href="#new"/></svg><svg><use href="#open"/></svg><svg><use href="#save"/></svg><i></i><svg><use href="#print"/></svg><svg><use href="#preview"/></svg><svg><use href="#plot"/></svg><svg><use href="#globe"/></svg><i></i><svg><use href="#cut"/></svg><svg><use href="#copy"/></svg><svg><use href="#paste"/></svg><svg><use href="#match"/></svg><svg><use href="#block"/></svg><i></i><svg><use href="#undo"/></svg><span class="caret"></span><svg><use href="#redo"/></svg><span class="caret"></span><i></i><svg><use href="#hand"/></svg><svg><use href="#zoom"/></svg><svg><use href="#zoomw"/></svg><svg><use href="#zoomp"/></svg><i></i><svg><use href="#props"/></svg><svg><use href="#grid"/></svg><svg><use href="#palette"/></svg><svg><use href="#sheet"/></svg><svg><use href="#markup"/></svg><svg><use href="#calc"/></svg><i></i><svg><use href="#help"/></svg></div>
    <span class="grip"></span>
    <div class="tools styles"><svg><use href="#textstyle"/></svg><select aria-label="文字样式"><option>Standard</option></select><i></i><svg><use href="#dimstyle"/></svg><select aria-label="标注样式"><option>STANDARD</option></select><i></i><svg><use href="#tabstyle"/></svg><select class="near" aria-label="表格样式"><option>Standard</option></select><i></i><svg><use href="#mlstyle"/></svg><select aria-label="多重引线样式"><option>Standard</option></select></div>
  </div>
  <div class="bar">
    <span class="grip thin"></span>
    <div class="tools"><select class="ws" aria-label="工作空间"><option>AutoCAD 经典</option></select><svg><use href="#gear"/></svg><svg><use href="#wsave"/></svg></div>
    <span class="grip"></span>
    <div class="tools"><svg><use href="#layerman"/></svg><label class="layer"><svg><use href="#bulb"/></svg><svg><use href="#sun"/></svg><svg><use href="#ghost"/></svg><svg><use href="#lock"/></svg><b></b><select aria-label="图层"><option>0</option></select></label><svg><use href="#layers"/></svg><svg><use href="#layerprev"/></svg><svg><use href="#layerman"/></svg></div>
    <span class="grip"></span>
    <div class="tools props"><label class="c1"><b></b><select aria-label="颜色"><option>ByLayer</option></select></label><i></i><label class="c2"><s></s><select aria-label="线型"><option>ByLayer</option></select></label><i></i><label class="c3"><s></s><select aria-label="线宽"><option>ByLayer</option></select></label><i></i><label class="c4"><select aria-label="打印样式" disabled><option>ByColor</option></select></label></div>
    <span class="grip"></span>
    <div class="tools last"><svg><use href="#layers"/></svg><svg><use href="#laycur"/></svg><i></i><svg><use href="#bulbb"/></svg><svg><use href="#bulbs"/></svg><svg><use href="#bulb"/></svg><svg><use href="#bulbl"/></svg><svg><use href="#snow"/></svg><svg><use href="#snows"/></svg><svg><use href="#sun"/></svg><svg><use href="#lockb"/></svg><svg><use href="#lockbs"/></svg><svg><use href="#locky"/></svg><svg><use href="#laycur"/></svg><svg><use href="#layers"/></svg></div>
  </div>
</div>

<main class="work">
  <aside class="tz">
    <h2>天正软...</h2>
    <ul><li><svg><use href="#tri"/></svg><span>设 置</span></li><li><svg><use href="#tri"/></svg><span>轴网柱子</span></li><li><svg><use href="#tri"/></svg><span>墙 体</span></li><li><svg><use href="#tri"/></svg><span>门 窗</span></li><li><svg><use href="#tri"/></svg><span>房间屋顶</span></li><li><svg><use href="#trid"/></svg><span>楼梯其他</span></li></ul>
    <ul><li><svg><use href="#s1"/></svg><span>直线梯段</span></li><li><svg><use href="#s2"/></svg><span>圆弧梯段</span></li><li><svg><use href="#s3"/></svg><span>任意梯段</span></li><li><svg><use href="#s4"/></svg><span>添加扶手</span></li><li><svg><use href="#s5"/></svg><span>连接扶手</span></li></ul>
    <ul class="ruled"><li><svg><use href="#s6"/></svg><span>双跑楼梯</span></li><li><svg><use href="#s7"/></svg><span>多跑楼梯</span></li><li><svg><use href="#s8"/></svg><span>双分平行</span></li><li><svg><use href="#s9"/></svg><span>双分转角</span></li><li><svg><use href="#s8"/></svg><span>双分三跑</span></li><li><svg><use href="#s10"/></svg><span>交叉楼梯</span></li><li><svg><use href="#s11"/></svg><span>剪刀楼梯</span></li><li><svg><use href="#s12"/></svg><span>三角楼梯</span></li><li><svg><use href="#s8"/></svg><span>矩形转角</span></li></ul>
    <ul class="ruled"><li><svg><use href="#s13"/></svg><span>电 梯</span></li><li><svg><use href="#s14"/></svg><span>自动扶梯</span></li></ul>
    <ul class="ruled"><li><svg><use href="#s15"/></svg><span>阳 台</span></li><li><svg><use href="#s6"/></svg><span>台 阶</span></li><li><svg><use href="#s16"/></svg><span>坡 道</span></li><li><svg><use href="#s17"/></svg><span>散 水</span></li></ul>
    <ul class="ruled"><li><svg><use href="#tri"/></svg><span>立 面</span></li><li><svg><use href="#tri"/></svg><span>剖 面</span></li><li><svg><use href="#tri"/></svg><span>文字表格</span></li><li><svg><use href="#tri"/></svg><span>尺寸标注</span></li><li><svg><use href="#tri"/></svg><span>符号标注</span></li><li><svg><use href="#tri"/></svg><span>图层控制</span></li><li><svg><use href="#tri"/></svg><span>工 具</span></li><li><svg><use href="#tri"/></svg><span>三维建模</span></li><li><svg><use href="#tri"/></svg><span>图块图案</span></li><li><svg><use href="#tri"/></svg><span>文件布图</span></li><li><svg><use href="#tri"/></svg><span>其 它</span></li></ul>
  </aside>

  <div class="center">
    <div class="stage">
      <div class="vbar"><div class="vtools"><svg><use href="#line"/></svg><svg><use href="#xline"/></svg><svg><use href="#pline"/></svg><svg><use href="#poly"/></svg><svg><use href="#rect"/></svg><svg><use href="#arc"/></svg><svg><use href="#circle"/></svg><svg><use href="#cloud"/></svg><svg><use href="#spline"/></svg><svg><use href="#ellipse"/></svg><svg><use href="#earc"/></svg><svg><use href="#insert"/></svg><svg><use href="#mkblock"/></svg><svg><use href="#point"/></svg><svg><use href="#hatch"/></svg><svg><use href="#grad"/></svg><svg><use href="#region"/></svg><svg><use href="#table"/></svg><svg><use href="#text"/></svg><svg><use href="#addsel"/></svg></div></div>

      <div class="doc">
        <div class="view">
          <section class="canvas">
            <span class="viewlabel">[-][俯视][二维线框]</span>
            <svg class="ucs" viewBox="0 0 52 24"><path d="M9 0v13M12 16h30M45 7l8 8M53 7l-8 8" stroke="#ddd" fill="none"/><path d="M6 13h6v6H6z" stroke="#ddd" fill="#000"/></svg>
            <div class="palette"><button aria-label="关闭"><svg viewBox="0 0 8 8"><path d="M1 1l6 6M7 1L1 7" stroke="#111" stroke-width="1.500"/></svg></button><button aria-label="自动隐藏"><svg viewBox="0 0 8 8"><path d="M0 0h8v8H0z" fill="#111"/><path d="M2 1v6M4 2l3 2-3 2z" stroke="#eee" fill="#eee"/></svg></button><button aria-label="特性"><svg viewBox="0 0 8 8"><path d="M0 0h8v8H0z" fill="#111"/><path d="M1 2h6M2 4h1v3M5 4h1v3" stroke="#eee" fill="none"/></svg></button><span>工程管理</span><svg class="pi"><use href="#chart"/></svg></div>
            <div class="cube">
              <svg viewBox="0 0 70 70"><circle cx="35" cy="35" r="31" fill="none" stroke="#383838" stroke-width="7"/></svg>
              <span class="n">北</span><span class="w">西</span><span class="e">东</span><span class="s">南</span><button class="top">上</button>
            </div>
            <button class="wcs">WCS</button>
          </section>
          <div class="vscroll"><svg viewBox="0 0 8 6"><path d="M1 5l3-3 3 3"/></svg><b></b><svg viewBox="0 0 8 6"><path d="M1 1l3 3 3-3"/></svg></div>
        </div>
        <div class="layouts">
          <div class="nav"><button aria-label="第一个"><svg viewBox="0 0 8 8"><path d="M1 0v8M7 1L3 4l4 3z"/></svg></button><button aria-label="上一个"><svg viewBox="0 0 8 8"><path d="M6 1L2 4l4 3z"/></svg></button><button aria-label="下一个"><svg viewBox="0 0 8 8"><path d="M2 1l4 3-4 3z"/></svg></button><button aria-label="最后一个"><svg viewBox="0 0 8 8"><path d="M7 0v8M1 1l4 3-4 3z"/></svg></button></div>
          <button class="model">模型</button><button class="lay">布局1</button><button class="lay">布局2</button>
          <div class="hscroll"><svg viewBox="0 0 6 8"><path d="M5 1L2 4l3 3"/></svg><b></b><svg viewBox="0 0 6 8"><path d="M1 1l3 3-3 3"/></svg></div>
        </div>
      </div>

      <div class="vbar right"><div class="vtools"><svg><use href="#erase"/></svg><svg><use href="#mcopy"/></svg><svg><use href="#mirror"/></svg><svg><use href="#offset"/></svg><svg><use href="#array"/></svg><svg><use href="#move"/></svg><svg><use href="#rotate"/></svg><svg><use href="#scale"/></svg><svg><use href="#stretch"/></svg><svg><use href="#trim"/></svg><svg><use href="#extend"/></svg><svg><use href="#brk"/></svg><svg><use href="#brk2"/></svg><svg><use href="#join"/></svg><svg><use href="#chamfer"/></svg><svg><use href="#fillet"/></svg><svg><use href="#blend"/></svg><svg><use href="#explode"/></svg></div>
      <div class="vtools second"><svg><use href="#order"/></svg><svg><use href="#order2"/></svg><svg><use href="#order3"/></svg><svg><use href="#order4"/></svg><hr><svg><use href="#annof"/></svg><svg><use href="#hback"/></svg></div></div>
    </div>
    <div class="cmd">
      <div class="handle"><i></i><button aria-label="关闭"><svg viewBox="0 0 8 8"><path d="M1 1l6 6M7 1L1 7" stroke="#fff" stroke-width="1.700"/></svg></button></div>
      <div class="cmdbody"><div class="history"></div><label class="prompt"><svg viewBox="0 0 13 12"><path d="M1 1h11v10H1z" fill="#eceff2" stroke="#aaa"/><path d="M3 3l3 3-3 3M7 9h3" stroke="#555" fill="none"/></svg><span class="caret"></span><input type="text" aria-label="命令" placeholder="键入命令"></label></div>
    </div>
  </div>

  <div class="mark"></div>
  <svg class="arrow" viewBox="0 0 100 68"><path d="M93 63L12 9" stroke="#e80c0c" stroke-width="3"/><path d="M0 0l16 3-7 11z" fill="#e80c0c"/></svg>
</main>

<footer class="status">
  <button class="scale">比例 1:100<span class="caret"></span></button>
  <span class="coord">-61788, 66445, 0</span>
  <div class="toggles"><button aria-label="推断约束"><svg><use href="#infer"/></svg></button><button aria-label="捕捉"><svg><use href="#snap"/></svg></button><button class="on" aria-label="栅格"><svg><use href="#grid"/></svg></button><button class="on" aria-label="正交"><svg><use href="#ortho"/></svg></button><button aria-label="极轴"><svg><use href="#polar"/></svg></button><button class="on" aria-label="对象捕捉"><svg><use href="#osnap"/></svg></button><button aria-label="三维捕捉"><svg><use href="#osnap3"/></svg></button><button aria-label="追踪"><svg><use href="#angle"/></svg></button><button aria-label="动态UCS"><svg><use href="#ducs"/></svg></button><button aria-label="动态输入"><svg><use href="#dyn"/></svg></button><button class="on" aria-label="线宽"><svg><use href="#plus"/></svg></button><button class="on" aria-label="透明度"><svg><use href="#trans"/></svg></button><button aria-label="快捷特性"><svg><use href="#qp"/></svg></button><button aria-label="选择循环"><svg><use href="#sc"/></svg></button><button aria-label="注释监视器"><svg><use href="#cross"/></svg></button></div>
  <div class="sright">
    <button class="txt">模型</button><button aria-label="布局"><svg><use href="#mspace"/></svg></button><button aria-label="快速查看"><svg><use href="#qview"/></svg></button>
    <span class="hole"></span>
    <button class="ratio"><svg><use href="#annos"/></svg>1:1<span class="caret"></span></button><button aria-label="注释可见性"><svg><use href="#annoy"/></svg></button><button aria-label="自动缩放"><svg><use href="#annog"/></svg></button>
    <span class="cut"></span>
    <button aria-label="切换工作空间"><svg><use href="#gear"/></svg></button><button aria-label="锁定"><svg><use href="#lockg"/></svg></button><button aria-label="硬件加速"><svg><use href="#ball"/></svg></button>
    <button class="txt on">编组</button><button class="txt">基线</button><button class="txt">填充</button><button class="txt on">加粗</button><button class="txt">动态标注</button>
    <span class="tray"><svg><use href="#globe"/></svg><svg><use href="#bulb"/></svg></span><span class="caret"></span><button aria-label="全屏显示"><svg><use href="#monitor"/></svg></button><span class="corner"></span>
  </div>
</footer>

<div class="wm" aria-hidden="true">
  <div class="wmtop"><span>Bai</span><div class="paw"><svg viewBox="0 0 50 56"><g fill="#fff"><ellipse cx="8" cy="21" rx="7" ry="9"/><ellipse cx="20" cy="9" rx="6" ry="9"/><ellipse cx="36" cy="10" rx="6" ry="9" transform="rotate(10 36 10)"/><ellipse cx="45" cy="26" rx="6" ry="8"/><path d="M26 23c9 0 10 7 16 13 8 8 6 19-6 19-5 0-7-2-10-2s-7 2-12 2C3 55 2 44 9 36c7-6 8-13 17-13z"/></g></svg><em>du</em></div><span class="cn">经验</span></div>
  <div class="url">jingyan.baidu.com</div>
</div>
</body>
</html>
```
FILE: styles.css
```css
* { box-sizing: border-box; }
html, body { height: 100%; }
body {
  margin: 0;
  display: flex;
  flex-direction: column;
  overflow: hidden;
  background: #666;
  color: #1c1c1c;
  font: 10px/12px "Noto Sans", "Noto Sans CJK SC", sans-serif;
}
button, input, select {
  font: inherit;
  color: inherit;
  border: 0;
  margin: 0;
  padding: 0;
  background: none;
  border-radius: 0;
  min-width: 0;
}
button { display: flex; align-items: center; justify-content: center; white-space: nowrap; }
svg { display: block; flex: none; width: 13px; height: 13px; overflow: visible; }
ul, h1, h2 { margin: 0; padding: 0; list-style: none; font-size: inherit; font-weight: normal; }
.sprite { position: absolute; width: 0; height: 0; }
.caret { flex: none; border: 3px solid transparent; border-top: 4px solid #333; border-bottom: 0; }

/* title and menu */
.head {
  flex: none;
  display: grid;
  grid-template-columns: 26px minmax(0, 1fr);
  grid-template-rows: 20px 16px;
  background: linear-gradient(#9a9a9a 0, #929292 19px, #555 19px, #7e7e7e 21px, #646464 100%);
}
.app {
  grid-row: 1 / 3;
  align-self: start;
  height: 26px;
  background: linear-gradient(#b4b4b4, #777);
  border: solid #444;
  border-width: 0 1px 1px 0;
  z-index: 1;
}
.app svg { width: 20px; height: 22px; }
.app .caret { border-width: 2px; border-top-width: 3px; }
.title { display: flex; align-items: stretch; height: 19px; }
.quick { flex: none; display: flex; align-items: center; width: 159px; padding-left: 3px; background: linear-gradient(#b0b0b0, #9a9a9a); margin-left: 1px; }
.quick button { width: 19px; }
.quick svg { width: 14px; height: 14px; }
.quick .caret { margin: 0 4px; border-width: 2px; border-top-width: 3px; }
.space { flex: none; width: 144px; display: flex; align-items: center; gap: 1px; padding: 0 4px 0 2px; background: #dedede; border: 1px solid #777; }
.space select { flex: 1; appearance: none; }
.more { width: 14px; flex: none; background: #999; border-left: 1px solid #555; }
.docname { flex: 1 1 164px; background: #fff; text-align: center; line-height: 15px; padding-left: 10px; }
.expand { width: 11px; flex: none; }
.expand span { border: 3px solid transparent; border-left: 4px solid #111; border-right: 0; }
.search { flex: 0 1 145px; width: 145px; background: #f4f4f4; border: 1px solid #777; padding: 0 2px; }
.search::placeholder { color: #777; font-style: italic; opacity: 1; font-size: 9px; }
.account { flex: 0 0 204px; display: flex; align-items: center; padding: 0 3px 0 0; color: #eee; }
.account svg { width: 14px; height: 14px; }
.account button { width: 19px; }
.account .login { width: auto; gap: 4px; margin-left: 2px; }
.account .caret { border-width: 2px; border-top-width: 3px; }
.account .push { margin-left: auto; margin-right: 4px; }
.account .hlp { margin: 0 4px 0 14px; }
.win { flex: 0 0 132px; display: flex; background: #fff; padding-left: 20px; }
.win button { flex: 1; padding-bottom: 5px; }
.win svg { width: 9px; height: 9px; fill: none; stroke: #aaa; }
.menu { display: flex; align-items: center; gap: 17px; padding: 0 2px 0 11px; color: #eee; }
.mdi { width: 24px; height: 9px; margin-left: auto; }

.files { flex: none; display: flex; align-items: flex-end; height: 23px; padding: 0 0 2px 12px; background: linear-gradient(#878787, #a0a0a0 90%, #666 91%); }
.filetab { position: relative; width: 112px; height: 19px; display: flex; align-items: center; padding: 0 17px 0 14px; }
.filetab svg { position: absolute; inset: 0; width: 100%; height: 100%; }
.filetab span { position: relative; }
.filetab button { position: relative; margin-left: auto; font-size: 13px; color: #777; }
.newtab { align-self: center; margin-left: -2px; }
.newtab svg { width: 18px; height: 13px; }

/* toolbars */
.bars { flex: none; display: flex; flex-direction: column; gap: 3px; padding: 2px 0 5px; background: #686868; border-bottom: 1px solid #999; }
.bar { display: flex; height: 14px; overflow: hidden; }
.grip { flex: none; width: 6px; background: #444; border: 1px solid #686868; }
.grip.thin { width: 5px; }
.tools { flex: none; display: flex; align-items: center; background: #ececec; }
.tools > svg { width: 15px; height: 12px; }
.tools > i { width: 1px; height: 11px; margin: 0 1px 0 2px; background: #999; }
.tools > .caret { border-width: 2px; border-top-width: 3px; margin: 0 2px; }
select { appearance: none; }
.bar select {
  height: 14px;
  line-height: 14px;
  background: url("data:image/svg+xml,%3Csvg xmlns='http://www.w3.org/2000/svg' viewBox='0 0 8 6'%3E%3Cpath d='M1 1l3 3 3-3' fill='none' stroke='%23555'/%3E%3C/svg%3E") no-repeat right 2px center / 8px 6px;
  padding-right: 13px;
}
.styles > select { width: 77px; padding-left: 11px; background-color: #e4e4e4; box-shadow: inset 0 0 0 1px #ccc; }
.styles > .near { padding-left: 3px; }
.ws { width: 113px; padding-left: 6px; }
.layer { display: flex; align-items: center; gap: 1px; width: 191px; padding-left: 1px; background-color: #e4e4e4; }
.layer svg { width: 10px; height: 11px; }
.layer b, .c1 b { flex: none; width: 7px; height: 7px; border: 1px solid #333; background: #fff; }
.layer select, .props select { flex: 1; }
.layer select { padding-left: 2px; }
.props { font: 9px/12px "DejaVu Serif", "Noto Sans CJK SC", serif; }
.props label { display: flex; align-items: center; gap: 3px; height: 14px; padding-left: 3px; background: #e4e4e4; }
.props s { flex: none; height: 1px; background: #222; }
.c1 { width: 97px; }
.c2 { width: 104px; }
.c2 s { width: 38px; }
.c3 { width: 80px; }
.c3 s { width: 22px; }
.c4 { width: 78px; }
.c4 select { color: #999; padding-left: 3px; opacity: 1; }
.last { flex: 1; }

/* work area */
.work { position: relative; flex: 1; min-height: 0; display: flex; gap: 3px; }
.tz { flex: 0 0 72px; background: #efefef; overflow: hidden; border-right: 1px solid #bbb; line-height: 11px; }
.tz h2 { height: 16px; margin-bottom: 4px; padding-left: 5px; line-height: 16px; background: linear-gradient(#a8a8a8, #8d8d8d); border-left: 2px solid #777; }
.tz ul { padding-top: 3px; }
.tz h2 + ul { padding-top: 0; }
.tz .ruled { border-top: 1px solid #bbb; padding-top: 2px; }
.tz li { display: flex; align-items: center; gap: 3px; height: 12px; padding-left: 1px; }
.tz li:nth-child(3n) { height: 11px; }
.tz svg { width: 11px; height: 11px; }
.tz span { width: 40px; text-align-last: justify; white-space: nowrap; }
.center { flex: 1; min-width: 0; display: flex; flex-direction: column; gap: 3px; }
.stage { flex: 1; min-height: 0; display: flex; gap: 4px; }
.vbar { flex: none; width: 15px; border-top: 4px solid #444; }
.vbar.right { width: 16px; padding-right: 1px; }
.vtools { background: #ececec; display: flex; flex-direction: column; align-items: center; border-left: 1px solid #ccc; }
.vtools svg { width: 12px; height: 12px; margin: 1px 0; }
.vtools svg:nth-child(3n) { margin-bottom: 2px; }
.vtools hr { width: 12px; margin: 1px 0; border: 0; border-top: 1px solid #aaa; }
.second { border-top: 7px solid #555; }
.doc { flex: 1; min-width: 0; display: flex; flex-direction: column; }
.view { flex: 1; min-height: 0; display: flex; }
.canvas {
  position: relative;
  flex: 1;
  overflow: hidden;
  color: #ddd;
  background-color: #000;
  background-image:
    linear-gradient(90deg, #20222b 1px, transparent 1px),
    linear-gradient(#20222b 1px, transparent 1px),
    linear-gradient(90deg, transparent 12px, #101116 12px 13px, transparent 13px 25px, #101116 25px 26px, transparent 26px 38px, #101116 38px 39px, transparent 39px 50px, #101116 50px 51px, transparent 51px),
    linear-gradient(transparent 12px, #101116 12px 13px, transparent 13px 25px, #101116 25px 26px, transparent 26px 38px, #101116 38px 39px, transparent 39px 50px, #101116 50px 51px, transparent 51px);
  background-size: 63px 63px;
  background-position: 38px 55px;
}
.viewlabel { position: absolute; left: 4px; top: 1px; font-size: 8px; white-space: nowrap; }
.palette {
  position: absolute;
  left: 1px;
  top: 7px;
  bottom: 20px;
  width: 16px;
  display: flex;
  flex-direction: column;
  align-items: center;
  padding: 1px 0 2px;
  background: #cbcbcb;
  color: #222;
}
.palette button { height: 12px; width: 14px; }
.palette button svg { width: 8px; height: 8px; }
.palette span { margin-top: auto; writing-mode: vertical-rl; text-orientation: sideways; transform: rotate(180deg); }
.palette .pi { width: 11px; height: 11px; margin-top: 5px; }
.ucs { position: absolute; left: 2px; bottom: 3px; width: 52px; height: 24px; }
.cube { position: absolute; top: 13px; right: 14px; width: 70px; height: 70px; color: #aaa; font-size: 11px; }
.cube > svg { width: 70px; height: 70px; }
.cube span { position: absolute; }
.cube .n { left: 29px; top: -4px; }
.cube .s { left: 29px; bottom: -4px; }
.cube .w { left: -4px; top: 29px; }
.cube .e { right: -4px; top: 29px; }
.cube .top { position: absolute; left: 20px; top: 20px; width: 30px; height: 30px; border: 5px solid #a5a5a5; background: #9b9fa8; color: #444; font-size: 19px; line-height: 20px; }
.wcs { position: absolute; top: 99px; right: 34px; width: 31px; height: 11px; padding-left: 3px; justify-content: flex-start; border: 1px solid #999; border-radius: 3px; background: #85868e; color: #ccc; font-size: 8px; }
.vscroll { flex: none; width: 14px; display: flex; flex-direction: column; align-items: center; padding: 5px 0 4px; background: #eee; }
.vscroll svg { width: 8px; height: 6px; }
.vscroll b { width: 12px; height: 14px; margin: auto 0 93px; background: #c8c8c8; }
.vscroll svg, .hscroll svg { fill: none; stroke: #444; stroke-width: 1.5; }
.layouts { flex: none; display: flex; height: 13px; background: #eee; }
.nav { display: flex; }
.nav button { width: 12px; border-right: 1px solid #bbb; }
.nav svg { width: 7px; height: 7px; fill: #555; stroke: #555; }
.model { width: 37px; color: #fff; background: #000; clip-path: polygon(0 0, 100% 0, 88% 100%, 12% 100%); }
.lay { width: 37px; background: linear-gradient(110deg, transparent 34px, #444 34px 35px, transparent 35px); }
.hscroll { flex: 0 1 309px; margin-left: auto; display: flex; align-items: center; padding: 0 18px 0 4px; border-left: 4px solid #ccc; }
.hscroll svg { width: 6px; height: 8px; }
.hscroll b { width: 13px; height: 11px; margin: 0 auto 0 69px; background: #c8c8c8; }
.cmd { flex: none; display: flex; height: 34px; }
.handle { width: 18px; background: #4d4d4d; padding-top: 4px; display: flex; flex-direction: column; align-items: center; gap: 6px; }
.handle i { width: 14px; height: 4px; background: repeating-linear-gradient(90deg, #888 0 1px, transparent 1px 3px); }
.handle svg { width: 8px; height: 8px; }
.cmdbody { flex: 1; display: flex; flex-direction: column; }
.history { height: 17px; background: #c6c6c6; border-bottom: 1px solid #aaa; }
.prompt { flex: 1; display: flex; align-items: center; background: #fff; padding-left: 4px; }
.prompt svg { width: 12px; height: 11px; }
.prompt .caret { border-width: 2px; border-top-width: 3px; border-top-color: #888; margin: 0 8px 0 3px; }
.prompt input { flex: 1; font-size: 13px; font-style: italic; }
.prompt input::placeholder { color: #999; opacity: 1; }

.mark { position: absolute; left: 0; top: 72px; width: 78px; height: 21px; border: 3px solid #e80c0c; }
.arrow { position: absolute; left: 56px; top: 97px; width: 100px; height: 68px; }

/* status bar */
.status { flex: none; height: 14px; overflow: hidden; display: flex; align-items: flex-start; background: linear-gradient(#555 1px, #a8a8a8 1px, #858585); }
.status button, .status > span { height: 19px; }
.status svg { width: 12px; height: 12px; }
.scale { width: 70px; gap: 7px; }
.coord { width: 105px; font: 9px/19px "DejaVu Sans Mono", monospace; border-left: 1px solid #777; white-space: nowrap; }
.toggles, .sright { display: flex; }
.toggles button { width: 14px; border-right: 1px solid #777; }
.toggles button:nth-child(3n) { width: 15px; }
.status .on { background: #b3deec; }
.sright { margin-left: auto; align-items: flex-start; height: 19px; }
.sright button { width: 14px; }
.sright .txt { width: auto; border: solid #777; border-width: 0 1px; }
.hole { width: 13px; height: 19px; background: #666; }
.sright .ratio { width: 39px; gap: 2px; }
.cut { width: 4px; height: 19px; margin: 0 1px; background: #777; }
.tray { display: flex; align-items: center; gap: 1px; height: 19px; margin: 0 5px; border: 1px solid #666; }
.sright > .caret { align-self: center; margin-right: 4px; border-width: 2px; border-top-width: 3px; }
.corner { width: 13px; }

/* overlay logo */
.wm { position: absolute; right: 56px; bottom: 20px; color: #fff; opacity: 0.72; pointer-events: none; text-shadow: 0 0 2px #999; }
.wmtop { display: flex; align-items: flex-end; font: bold 36px/32px "Liberation Sans", sans-serif; }
.paw { position: relative; margin: 0 5px 0 4px; }
.paw svg { width: 50px; height: 56px; }
.paw em { position: absolute; left: 0; right: 0; bottom: 2px; text-align: center; font: bold 22px/24px "Liberation Sans", sans-serif; color: #777; text-shadow: none; }
.wm .cn { font: bold 30px/32px "Noto Sans CJK SC", sans-serif; }
.url { font-size: 20px; line-height: 30px; }
```
